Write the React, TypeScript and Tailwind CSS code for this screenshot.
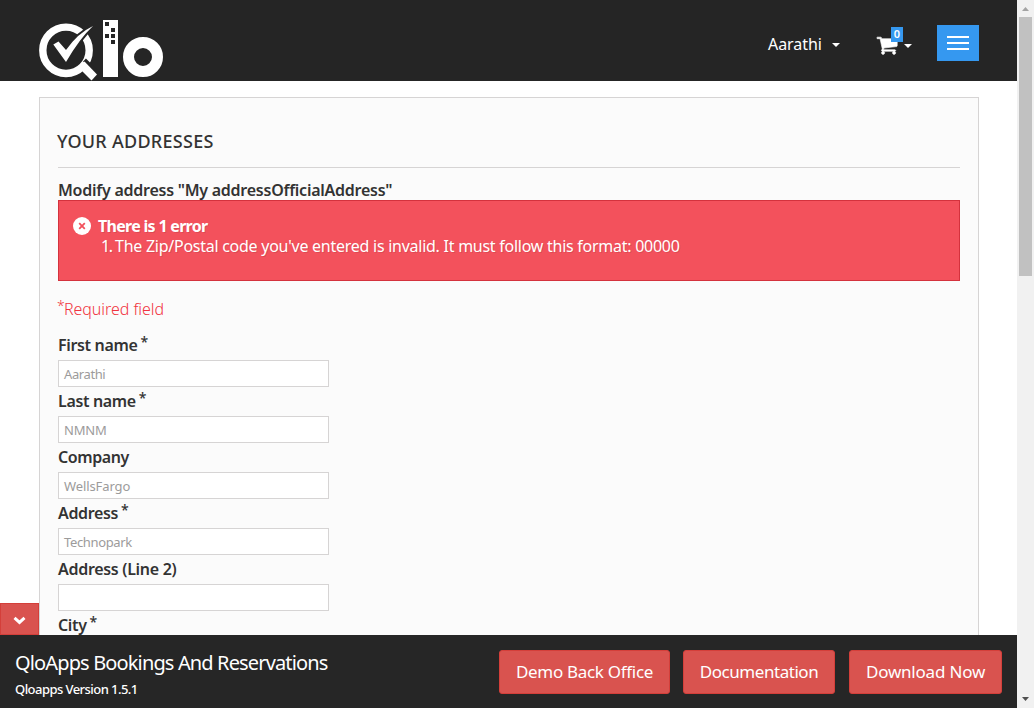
import React from "react";

const fields = [
  { label: "First name", value: "Aarathi", required: true, track: "tracking-[-0.35px]", valueTrack: "tracking-[-0.4px]" },
  { label: "Last name", value: "NMNM", required: true, track: "tracking-[-0.35px]", valueTrack: "tracking-[-0.2px]" },
  { label: "Company", value: "WellsFargo", required: false, track: "tracking-[-0.4px]", valueTrack: "tracking-[-0.1px]" },
  { label: "Address", value: "Technopark", required: true, track: "tracking-[-0.35px]", valueTrack: "tracking-[-0.35px]" },
  { label: "Address (Line 2)", value: "", required: false, track: "tracking-[-0.3px]", valueTrack: "" },
  { label: "City", value: "", required: true, track: "tracking-[-0.35px]", valueTrack: "" },
];

function Logo() {
  return (
    <svg className="ml-[38px] mt-[18px] h-[63px] w-[128px]" viewBox="38 18 128 63" aria-label="Qlo">
      <circle cx="66" cy="50.3" r="23.2" fill="none" stroke="#fff" strokeWidth="7.4" />
      <path d="M53.3 44.5 58.5 41.5 66 50Q78 33 93 26Q80 38 66 62Z" fill="#252525" stroke="#252525" strokeWidth="4" />
      <path d="M53.3 44.5 58.5 41.5 66 50Q78 33 93 26Q80 38 66 62Z" fill="#fff" />
      <path d="M84.5 60 99 74.5" stroke="#252525" strokeWidth="4" />
      <path d="M80 65.5 84.5 61.5 97 74.5 91.5 80.5 79 68Z" fill="#fff" />
      <path d="M103 20h15v57h-15z" fill="#fff" />
      <path d="M105 22h4v4h-4zM111 28h4v4h-4zM105 34h4v4h-4zM111 34h4v4h-4zM111 40h4v4h-4z" fill="#252525" />
      <circle cx="143" cy="57" r="14.5" fill="none" stroke="#fff" strokeWidth="11" />
    </svg>
  );
}

function Cart() {
  return (
    <svg className="h-[22px] w-[22px]" viewBox="0 0 1792 1792" fill="currentColor" stroke="currentColor" strokeWidth="50">
      <path d="M704 1536q0 52-38 90t-90 38-90-38-38-90 38-90 90-38 90 38 38 90zm896 0q0 52-38 90t-90 38-90-38-38-90 38-90 90-38 90 38 38 90zm128-1088v512q0 24-16.5 42.5t-40.5 21.5l-1044 122q13 60 13 70 0 16-24 64h920q26 0 45 19t19 45-19 45-45 19h-1024q-26 0-45-19t-19-45q0-11 8-31.5t16-36 21.5-40 15.5-29.5l-177-823h-204q-26 0-45-19t-19-45 19-45 45-19h256q16 0 28.5 6.5t19.5 15.5 13 24.5 8 26 5.5 29.5 4.5 26h1201q26 0 45 19t19 45z" />
    </svg>
  );
}

function Caret({ className }: { className: string }) {
  return (
    <svg className={`h-1 w-2 shrink-0 ${className}`} viewBox="0 0 8 4">
      <path d="M0 0h8L4 4z" fill="#fff" />
    </svg>
  );
}

function Header() {
  return (
    <header className="flex h-[81px] shrink-0 bg-[#252525] text-white">
      <Logo />
      <div className="ml-auto flex items-start pr-[38px]">
        <span className="mt-8 w-[55px] text-base leading-6 tracking-[-0.05px] whitespace-nowrap">Aarathi</span>
        <Caret className="mt-[43px] ml-[9px]" />
        <div className="relative mt-[34px] ml-[36px] h-5 w-[21px]">
          <Cart />
          <span className="absolute -top-[7px] left-[15px] flex h-[15px] w-3 items-center justify-center bg-[#3598f0] text-[11px] font-semibold">0</span>
        </div>
        <Caret className="mt-[44px] ml-[7px]" />
        <button className="mt-[25px] ml-[25px] flex h-9 w-[42px] flex-col items-center justify-center gap-1 bg-[#3598f0]">
          <span className="h-0.5 w-[22px] bg-white" />
          <span className="h-0.5 w-[22px] bg-white" />
          <span className="h-0.5 w-[22px] bg-white" />
        </button>
      </div>
    </header>
  );
}

function ErrorBox() {
  return (
    <div className="flex h-[81px] border border-[#d4323d] bg-[#f3515c] pt-4 pl-[14px] text-base leading-5 text-white [text-shadow:1px_1px_rgba(0,0,0,0.1)]">
      <svg className="h-[18px] w-[18px] shrink-0" viewBox="0 0 18 18">
        <circle cx="9" cy="9" r="9" fill="#fff" />
        <path d="M6.2 6.2l5.6 5.6M11.8 6.2l-5.6 5.6" stroke="#f3515c" strokeWidth="1.8" />
      </svg>
      <div className="-mt-px ml-[7px] whitespace-nowrap">
        <p className="font-bold tracking-[-0.7px]">There is 1 error</p>
        <p className="ml-[3px] flex tracking-[-0.26px]">
          <span className="w-[14px] tracking-[-1.5px]">1.</span>
          <span>The Zip/Postal code you've entered is invalid. It must follow this format: 00000</span>
        </p>
      </div>
    </div>
  );
}

function AddressForm() {
  return (
    <main className="mt-4 mr-[38px] ml-[39px] h-[600px] border border-[#d6d4d4] bg-[#fbfbfb] px-[18px] text-[#333]">
      <h1 className="mt-[29px] h-[41px] border-b border-[#d6d4d4] text-lg leading-7 font-medium tracking-[0.27px]">
        <span className="-ml-px">YOUR ADDRESSES</span>
      </h1>
      <p className="mt-3 h-5 text-base leading-5 font-semibold tracking-[-0.25px] whitespace-nowrap">Modify address "My addressOfficialAddress"</p>
      <ErrorBox />
      <p className="mt-[18px] flex h-5 text-base leading-5 font-light tracking-[-0.05px] text-[#f13340]">
        <span className="-mt-[3px] -ml-px w-[7px] text-sm">*</span>Required field
      </p>
      <form className="mt-4">
        {fields.map((field) => (
          <div key={field.label} className="h-14">
            <label className="flex h-[25px] text-base leading-5 font-semibold whitespace-nowrap">
              <span className={field.track}>{field.label}</span>
              {field.required && <span className="-mt-[3px] ml-[3px] text-sm font-medium">*</span>}
            </label>
            <div className={`h-[27px] w-[271px] border border-[#d6d4d4] bg-white pl-[5px] text-[13px] leading-[27px] text-[#9c9b9b] ${field.valueTrack}`}>
              {field.value}
            </div>
          </div>
        ))}
      </form>
    </main>
  );
}

function Footer() {
  return (
    <footer className="relative flex h-[73px] shrink-0 bg-[#262626] text-white">
      <button className="absolute -top-8 left-0 flex h-8 w-[39px] items-center justify-center border border-[#d43f3a] bg-[#d9534f]">
        <svg className="mt-0.5 h-[9px] w-[13px]" viewBox="0 0 13 9">
          <path d="M1.5 1.8 6.5 6.4 11.5 1.8" fill="none" stroke="#fff" strokeWidth="3" />
        </svg>
      </button>
      <div className="ml-[15px] pt-[14px] whitespace-nowrap">
        <p className="text-xl leading-7 tracking-[-0.86px]">QloApps Bookings And Reservations</p>
        <p className="mt-0.5 text-[13px] leading-5 font-medium tracking-[-0.55px]">Qloapps Version 1.5.1</p>
      </div>
      <div className="mt-[15px] mr-[15px] ml-auto flex h-11 text-[17px] whitespace-nowrap">
        <button className="mr-[13px] w-[171px] rounded-[3px] border border-[#d43f3a] bg-[#d9534f] tracking-[-0.3px]">Demo Back Office</button>
        <button className="mr-[14px] w-[152px] rounded-[3px] border border-[#d43f3a] bg-[#d9534f] tracking-[-0.45px]">Documentation</button>
        <button className="w-[153px] rounded-[3px] border border-[#d43f3a] bg-[#d9534f] tracking-[-0.2px]">Download Now</button>
      </div>
    </footer>
  );
}

function Scrollbar() {
  return (
    <div className="flex h-full w-[17px] shrink-0 flex-col items-center bg-[#f1f1f1]">
      <svg className="h-[17px] w-[17px]" viewBox="0 0 17 17"><path d="M5 11h7L8.5 7z" fill="#a3a3a3" /></svg>
      <div className="h-[259px] w-[13px] bg-[#c1c1c1]" />
      <svg className="mt-auto h-[17px] w-[17px]" viewBox="0 0 17 17"><path d="M5 6h7L8.5 10z" fill="#505050" /></svg>
    </div>
  );
}

export default function App() {
  return (
    <div className="flex h-[708px] w-[1034px] overflow-hidden bg-white font-['Noto_Sans',sans-serif]">
      <div className="flex w-[1017px] flex-col">
        <Header />
        <div className="min-h-0 flex-1 overflow-hidden"><AddressForm /></div>
        <Footer />
      </div>
      <Scrollbar />
    </div>
  );
}
